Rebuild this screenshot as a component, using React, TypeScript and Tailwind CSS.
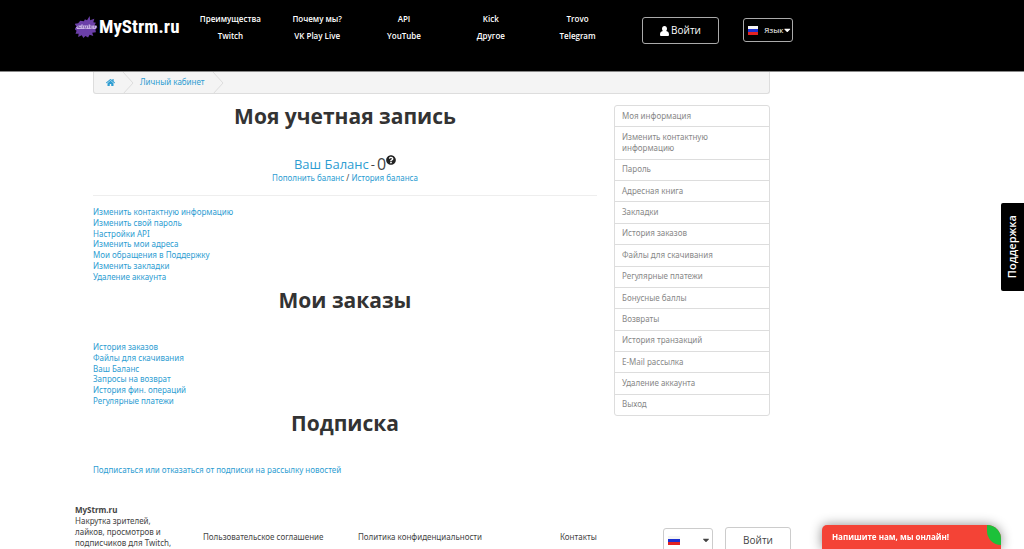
import { FaCaretDown, FaHome, FaQuestionCircle } from "react-icons/fa";

const navColumns = [
  ["Преимущества", "Twitch"],
  ["Почему мы?", "VK Play Live"],
  ["API", "YouTube"],
  ["Kick", "Другое"],
  ["Trovo", "Telegram"],
];

const accountLinks = [
  "Изменить контактную информацию",
  "Изменить свой пароль",
  "Настройки API",
  "Изменить мои адреса",
  "Мои обращения в Поддержку",
  "Изменить закладки",
  "Удаление аккаунта",
];

const orderLinks = [
  "История заказов",
  "Файлы для скачивания",
  "Ваш Баланс",
  "Запросы на возврат",
  "История фин. операций",
  "Регулярные платежи",
];

const sideLinks = [
  "Моя информация",
  "Изменить контактную информацию",
  "Пароль",
  "Адресная книга",
  "Закладки",
  "История заказов",
  "Файлы для скачивания",
  "Регулярные платежи",
  "Бонусные баллы",
  "Возвраты",
  "История транзакций",
  "E-Mail рассылка",
  "Удаление аккаунта",
  "Выход",
];

function LogoMark() {
  return (
    <svg viewBox="0 0 44 42" className="h-[22px] w-[23px] shrink-0">
      <path
        fill="#6b3fa8"
        d="M10 9l7 1 2-4 4 2 5-8 1 8 8-3-2 7 5 1-3 5 6 4-4 4 1 5-7 1 2 6-7-2-3 5-5-3-4 4-3-5-7 3 1-6-6 0 2-6-4-3 4-5-4-5 7-1z"
      />
      <path fill="#c9b3e6" d="M6 18h6v-2h3v2h11v-2h3v2h12l1 2-3 5H4l-2-3z" />
      <path
        fill="none"
        stroke="#4d2785"
        strokeWidth="1"
        d="M7 18v4h4M14 18v5M18 19v4h4v-4M26 18v5M30 19h4M30 19v4h4M37 18v5M4 21h3"
      />
    </svg>
  );
}

function UserIcon() {
  return (
    <svg viewBox="0 0 18 20" className="h-[10px] w-[9px]" fill="currentColor">
      <path d="M9 0c3 0 5 2.300 5 5.500 0 2-.6 3.500-1.600 4.700C16 10.800 18 13 18 17.500c0 1.600-1 2.500-2.500 2.500h-13C1 20 0 19.100 0 17.500 0 13 2 10.800 5.600 10.200 4.600 9 4 7.500 4 5.500 4 2.300 6 0 9 0z" />
    </svg>
  );
}

function Flag() {
  return (
    <span className="flex h-[9px] w-3 flex-col">
      <span className="flex-1 bg-[#f4f4f4]" />
      <span className="flex-1 bg-[#1c2fd0]" />
      <span className="flex-1 bg-[#e32222]" />
    </span>
  );
}

function Crumb({ children }: { children: React.ReactNode }) {
  return (
    <li className="flex items-center">
      {children}
      <svg viewBox="0 0 12 22" className="ml-[7px] h-[22px] w-3" fill="none" stroke="#dddddd">
        <path d="M1 0l10 11L1 22" />
      </svg>
    </li>
  );
}

function LinkList({ items, className }: { items: string[]; className: string }) {
  return (
    <ul className={`grid content-between justify-start leading-[10px] text-[#2d9dd2] ${className}`}>
      {items.map((item) => (
        <li key={item}>
          <a href="#">{item}</a>
        </li>
      ))}
    </ul>
  );
}

function Heading({ children }: { children: React.ReactNode }) {
  return (
    <h2 className="text-center font-['Open_Sans',sans-serif] text-[21px] leading-[22px] font-bold text-[#333]">
      {children}
    </h2>
  );
}

export default function App() {
  return (
    <div className="min-h-screen bg-white font-['Noto_Sans',sans-serif] text-[8px] text-[#444]">
      <header className="border-b border-[#888] bg-black font-['Open_Sans',sans-serif] text-white">
        <div className="flex h-[71px] items-start pl-[75px]">
          <a href="#" className="mt-4 flex w-[112px] items-center gap-px">
            <LogoMark />
            <span className="font-['Liberation_Sans_Narrow','Roboto_Condensed',sans-serif] text-[19px] leading-5 font-bold">
              MyStrm.ru
            </span>
          </a>
          <nav className="mt-[11px] grid w-[434px] grid-cols-5 text-center leading-4 font-semibold">
            {navColumns.map(([top, bottom]) => (
              <div key={top} className="flex flex-col gap-px">
                <a href="#">{top}</a>
                <a href="#">{bottom}</a>
              </div>
            ))}
          </nav>
          <button className="mt-[17px] ml-[21px] flex h-[27px] w-[77px] items-center justify-center gap-0.5 rounded-[3px] border border-[#aaa] text-[10px] font-medium">
            <UserIcon />
            Войти
          </button>
          <button className="mt-[18px] ml-6 flex h-6 w-[50px] items-center rounded-[3px] border border-[#aaa] pl-1 font-medium">
            <Flag />
            <span className="ml-1.5">Язык</span>
            <FaCaretDown className="size-[10px]" />
          </button>
        </div>
      </header>

      <div className="w-full max-w-[770px] pl-[93px]">
        <ol className="flex h-[22px] overflow-hidden rounded-b-[3px] border border-t-0 border-[#ddd] bg-[#f4f4f4] leading-[10px] text-[#2d9dd2]">
          <Crumb>
            <a href="#" aria-label="Главная" className="pl-3">
              <FaHome className="size-[9px]" />
            </a>
          </Crumb>
          <Crumb>
            <a href="#" className="pb-0.5 pl-1.5">
              Личный кабинет
            </a>
          </Crumb>
        </ol>

        <div className="mt-[11px] flex items-start gap-[17px]">
          <main className="flex-1">
            <Heading>Моя учетная запись</Heading>
            <div className="mt-7 border-b border-[#eee] pb-3 text-center">
              <p className="flex h-[18px] items-center justify-center font-['Open_Sans',sans-serif] text-[13px] leading-[18px]">
                <a href="#" className="text-[#2d9dd2]">
                  Ваш Баланс
                </a>
                <span className="mx-0.5">-</span>
                <span className="text-[16px]">0</span>
                <FaQuestionCircle className="mb-2 size-[10px] text-[#222]" />
              </p>
              <p className="leading-[10px]">
                <a href="#" className="text-[#2d9dd2]">
                  Пополнить баланс
                </a>{" "}
                /{" "}
                <a href="#" className="text-[#2d9dd2]">
                  История баланса
                </a>
              </p>
            </div>
            <LinkList items={accountLinks} className="mt-[11px] mb-[7px] min-h-[75px]" />
            <Heading>Мои заказы</Heading>
            <LinkList items={orderLinks} className="mt-[31px] mb-1.5 min-h-16" />
            <Heading>Подписка</Heading>
            <LinkList
              items={["Подписаться или отказаться от подписки на рассылку новостей"]}
              className="mt-[31px]"
            />
          </main>

          <aside className="w-[156px]">
            <ul className="flex min-h-[311px] flex-col divide-y divide-[#ddd] rounded-[3px] border border-[#ddd] leading-[11px] text-[#888]">
              {sideLinks.map((item) => (
                <li key={item} className="flex grow items-center">
                  <a href="#" className="ml-[7px] w-[124px] pt-[3px] pb-[5px]">
                    {item}
                  </a>
                </li>
              ))}
            </ul>
          </aside>
        </div>
      </div>

      <footer className="mt-[29px] flex items-start pl-[75px] leading-[11px]">
        <p className="w-[104px]">
          <b>MyStrm.ru</b>
          <br />
          Накрутка зрителей, лайков, просмотров и подписчиков для Twitch,
        </p>
        <div className="mt-[27px] flex">
          <a href="#" className="ml-6 w-[155px]">
            Пользовательское соглашение
          </a>
          <a href="#" className="w-[202px]">
            Политика конфиденциальности
          </a>
          <a href="#" className="w-[103px]">
            Контакты
          </a>
        </div>
        <button
          aria-label="Язык"
          className="mt-6 flex h-6 w-[50px] items-center justify-between rounded-[3px] border border-[#ccc] pr-px pl-1"
        >
          <Flag />
          <FaCaretDown className="size-[10px]" />
        </button>
        <button className="mt-[23px] ml-3 h-[27px] w-[66px] rounded-[3px] border border-[#ccc] font-['Open_Sans',sans-serif] text-[10px]">
          Войти
        </button>
      </footer>

      <button className="fixed top-[203px] right-0 flex h-[88px] w-[23px] items-center justify-center rounded-l-[2px] bg-black font-['Open_Sans',sans-serif] text-[11px] font-semibold text-white">
        <span className="rotate-180 [writing-mode:vertical-rl]">Поддержка</span>
      </button>

      <button className="fixed right-[23px] bottom-0 h-6 w-[179px] rounded-tl-[5px] rounded-tr-[14px] bg-[#f44336] pl-2.5 text-left font-['Open_Sans',sans-serif] font-bold text-white shadow-[0_0_12px_rgba(0,0,0,0.45)]">
        Напишите нам, мы онлайн!
        <span className="absolute top-0 right-0 h-5 w-3.5 rounded-tr-[14px] rounded-bl-[14px] bg-[#1cc13a]" />
      </button>
    </div>
  );
}
